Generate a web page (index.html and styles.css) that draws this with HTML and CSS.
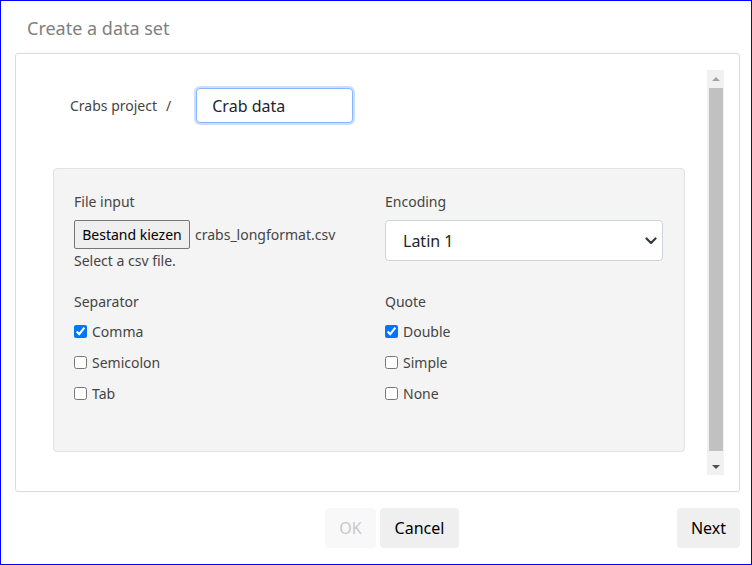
FILE: index.html
```html
<!DOCTYPE html>
<html>
<head>
<meta charset="utf-8">
<link rel="stylesheet" href="styles.css">
</head>
<body>
<div class="dialog">
  <h1 class="title">Create a data set</h1>
  <div class="panel">
    <div class="content">
      <div class="project-row">
        <span class="project-label">Crabs project</span>
        <span class="slash">/</span>
        <input class="name-input" type="text" value="Crab data">
      </div>
      <div class="options">
        <div class="field">
          <div class="label">File input</div>
          <div class="file-row">
            <span class="file-btn">Bestand kiezen</span>
            <span class="file-name">crabs_longformat.csv</span>
          </div>
          <div class="hint">Select a csv file.</div>
        </div>
        <div class="field">
          <div class="label">Encoding</div>
          <div class="select-wrap">
            <select class="select"><option>Latin 1</option></select>
            <svg class="chevron" width="12" height="8" viewBox="0 0 12 8"><path d="M1.5 1.5 6 6l4.5-4.5" fill="none" stroke="#343a40" stroke-width="2.2" stroke-linecap="round" stroke-linejoin="round"/></svg>
          </div>
        </div>
        <div class="field">
          <div class="label label-group">Separator</div>
          <label class="check"><input type="checkbox" checked><span>Comma</span></label>
          <label class="check"><input type="checkbox"><span>Semicolon</span></label>
          <label class="check"><input type="checkbox"><span>Tab</span></label>
        </div>
        <div class="field">
          <div class="label label-group">Quote</div>
          <label class="check"><input type="checkbox" checked><span>Double</span></label>
          <label class="check"><input type="checkbox"><span>Simple</span></label>
          <label class="check"><input type="checkbox"><span>None</span></label>
        </div>
      </div>
    </div>
    <div class="scrollbar">
      <div class="sb-btn"><span class="arrow-up"></span></div>
      <div class="sb-track"><div class="sb-thumb"></div></div>
      <div class="sb-btn"><span class="arrow-down"></span></div>
    </div>
  </div>
  <div class="footer">
    <button class="btn btn-ok" disabled>OK</button>
    <button class="btn btn-cancel">Cancel</button>
    <button class="btn btn-next">Next</button>
  </div>
</div>
</body>
</html>
```
FILE: styles.css
```css
html, body {
  margin: 0;
  padding: 0;
}
body {
  width: 752px;
  height: 565px;
  box-sizing: border-box;
  border: 1px solid #0000ff;
  background: #fff;
  font-family: "Noto Sans", sans-serif;
  color: #444;
  overflow: hidden;
}
.dialog {
  padding: 15px 11px 0 14px;
}
.title {
  margin: 0 0 13px 12px;
  font-size: 18px;
  font-weight: 400;
  line-height: 24px;
  color: #808080;
}
.panel {
  height: 439px;
  box-sizing: border-box;
  border: 1px solid #d9dbde;
  border-radius: 3px;
  box-shadow: 0 0 2px rgba(0,0,0,0.06);
  padding: 16px;
  display: flex;
}
.content {
  flex: 1;
  min-width: 0;
}
.project-row {
  display: flex;
  align-items: center;
  padding: 18px 0 0 38px;
  height: 35px;
}
.project-label {
  font-size: 14px;
  color: #444;
}
.slash {
  font-size: 14px;
  margin-left: 9px;
  color: #444;
}
.name-input {
  margin-left: 25px;
  width: 157px;
  height: 35px;
  box-sizing: border-box;
  border: 1px solid #86b7fe;
  border-radius: 4px;
  box-shadow: 0 0 0 2px rgba(13,110,253,0.22);
  padding: 0 0 0 15px;
  font-family: "Noto Sans", sans-serif;
  font-size: 16px;
  color: #212529;
  outline: none;
}
.options {
  margin: 45px 22px 0 21px;
  height: 284px;
  box-sizing: border-box;
  background: #f4f4f4;
  border: 1px solid #e2e2e2;
  border-radius: 4px;
  padding: 22px 20px 0 20px;
  display: grid;
  grid-template-columns: 278px 278px;
  column-gap: 33px;
  row-gap: 20px;
  align-content: start;
}
.label {
  font-size: 14px;
  line-height: 21px;
  margin-bottom: 8px;
}
.label-group {
  margin-bottom: 4px;
}
.file-row {
  display: flex;
  align-items: center;
}
.file-btn {
  display: inline-block;
  width: 116px;
  height: 29px;
  box-sizing: border-box;
  border: 1px solid #767676;
  border-radius: 2px;
  background: #efefef;
  color: #000;
  font-size: 14px;
  line-height: 27px;
  text-align: center;
}
.file-name {
  margin-left: 5px;
  font-size: 14px;
}
.hint {
  font-size: 14px;
  line-height: 21px;
  margin-top: 1px;
}
.select-wrap {
  position: relative;
  width: 278px;
  height: 41px;
}
.select {
  appearance: none;
  -webkit-appearance: none;
  width: 100%;
  height: 100%;
  box-sizing: border-box;
  border: 1px solid #ced4da;
  border-radius: 4px;
  background: #fff;
  padding: 0 0 0 17px;
  font-family: "Noto Sans", sans-serif;
  font-size: 16px;
  color: #212529;
}
.chevron {
  position: absolute;
  right: 6px;
  top: 17px;
}
.check {
  display: flex;
  align-items: center;
  height: 31px;
  font-size: 14px;
  color: #444;
}
.check input {
  margin: 0 5px 0 0;
  width: 13px;
  height: 13px;
}
.scrollbar {
  width: 17px;
  margin-right: -1px;
  display: flex;
  flex-direction: column;
  background: #f1f1f1;
}
.sb-btn {
  height: 17px;
  display: flex;
  align-items: center;
  justify-content: center;
}
.arrow-up {
  width: 0;
  height: 0;
  border-left: 4px solid transparent;
  border-right: 4px solid transparent;
  border-bottom: 4px solid #a3a3a3;
}
.arrow-down {
  width: 0;
  height: 0;
  border-left: 4px solid transparent;
  border-right: 4px solid transparent;
  border-top: 4px solid #505050;
}
.sb-track {
  flex: 1;
  padding: 1px 1px 7px 2px;
  display: flex;
}
.sb-thumb {
  flex: 1;
  background: #c1c1c1;
}
.footer {
  display: flex;
  margin-top: 16px;
  gap: 4px;
}
.btn {
  height: 40px;
  border: none;
  border-radius: 4px;
  background: #efefef;
  color: #000;
  font-family: "Noto Sans", sans-serif;
  font-size: 16px;
  padding: 0;
  text-align: center;
}
.btn-ok {
  width: 51px;
  margin-left: 310px;
  background: #f8f8f8;
  color: #c8c8c8;
}
.btn-cancel {
  width: 79px;
}
.btn-next {
  width: 63px;
  margin-left: auto;
}
```
